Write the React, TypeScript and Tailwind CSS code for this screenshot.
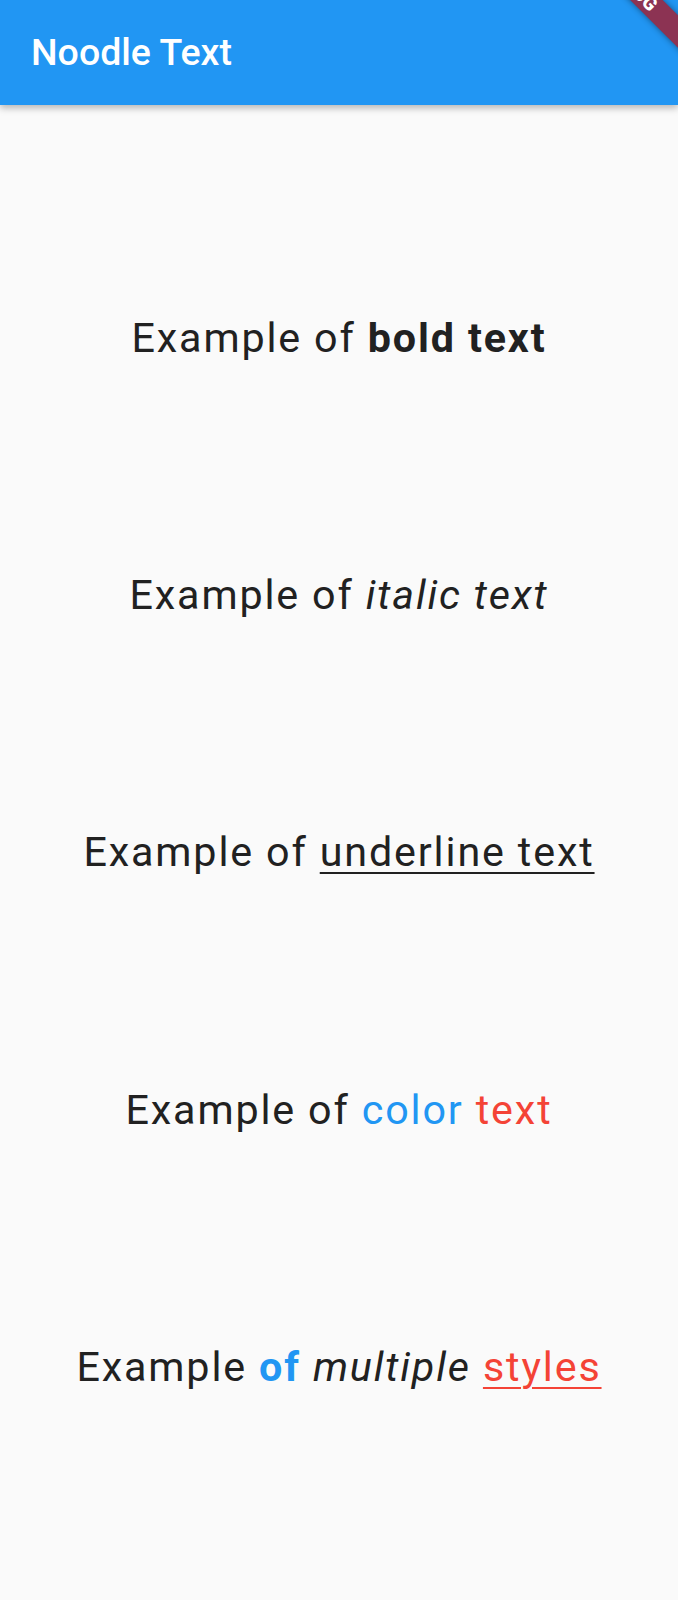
export default function App() {
  const lines = [
    <>
      Example of <span className="font-bold">bold text</span>
    </>,
    <>
      Example of <span className="italic">italic text</span>
    </>,
    <>
      Example of <span className="underline decoration-2 underline-offset-[6px]">underline text</span>
    </>,
    <>
      Example of <span className="text-[#2196f3]">color</span> <span className="text-[#f44336]">text</span>
    </>,
    <>
      Example <span className="font-bold text-[#2196f3]">of</span> <span className="italic">multiple</span>{" "}
      <span className="text-[#f44336] underline decoration-2 underline-offset-[6px]">styles</span>
    </>,
  ]

  return (
    <div className="min-h-[1600px] bg-[#fafafa] overflow-hidden font-['Roboto',sans-serif]">
      {/* App bar */}
      <header className="relative z-10 flex h-[105px] items-center overflow-hidden bg-[#2196f3] px-[31px] shadow-[0_3px_7px_rgba(0,0,0,0.28)]">
        <h1 className="text-[37.5px] font-medium leading-none text-white">Noodle Text</h1>
        {/* Debug banner */}
        <div className="absolute left-[533px] top-[-25px] flex h-[22.5px] w-[200px] rotate-45 items-center justify-center bg-[#8c3353] text-[19px] font-black leading-none text-white shadow-[0_0_6px_rgba(0,0,0,0.45)]">
          DEBUG
        </div>
      </header>

      {/* Body */}
      <main className="flex h-[1495px] flex-col items-center justify-evenly text-[41.25px] leading-[48px] tracking-[1.85px] text-[#212121]">
        {lines.map((line, i) => (
          <p key={i} className="whitespace-nowrap">
            {line}
          </p>
        ))}
      </main>
    </div>
  )
}
